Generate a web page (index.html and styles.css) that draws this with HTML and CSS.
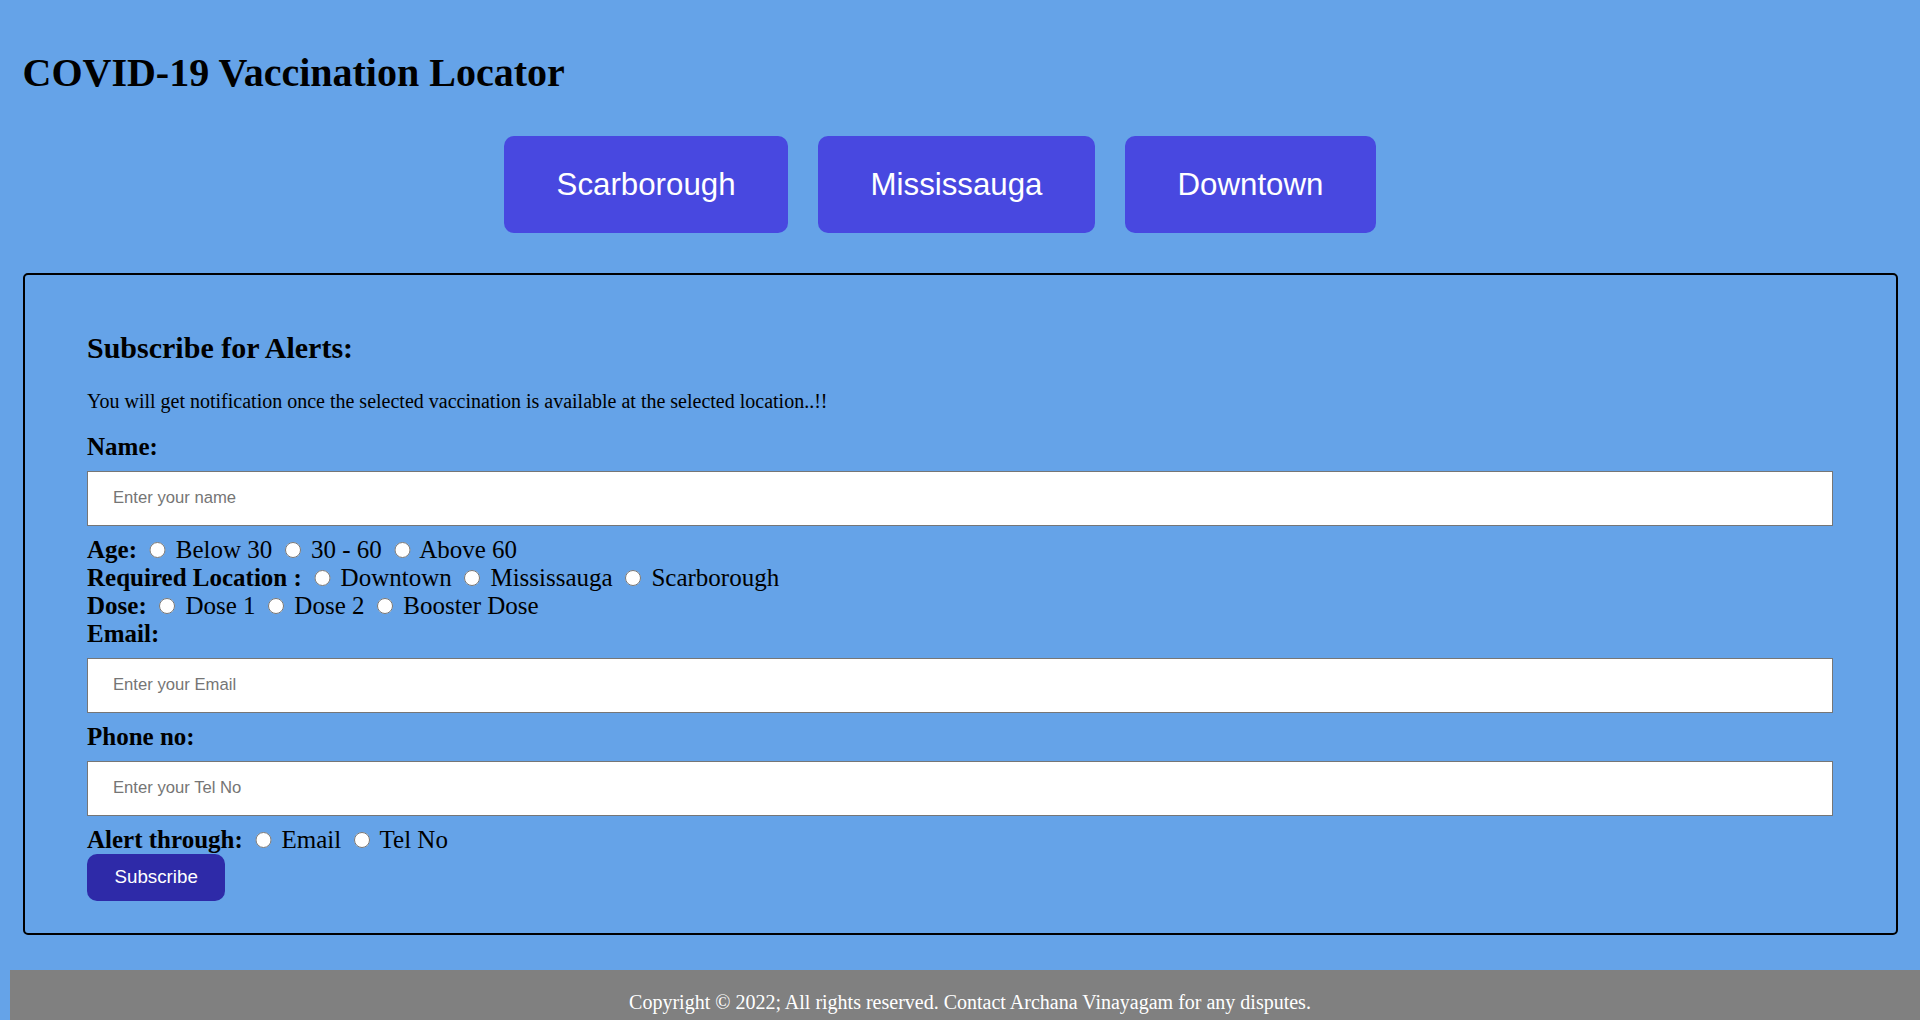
FILE: index.html
```html
<!DOCTYPE html>
<html lang="en">
<head>
<meta charset="utf-8">
<title>COVID-19 Vaccination Locator</title>
<link rel="stylesheet" href="styles.css">
</head>
<body>
<header class="header">
  <h1 class="title">COVID-19 Vaccination Locator</h1>
</header>
<nav class="nav">
  <button class="nav-btn" type="button">Scarborough</button>
  <button class="nav-btn" type="button">Mississauga</button>
  <button class="nav-btn" type="button">Downtown</button>
</nav>
<main class="panel">
  <h2 class="panel-title">Subscribe for Alerts:</h2>
  <p class="panel-note">You will get notification once the selected vaccination is available at the selected location..!!</p>
  <form class="form">
    <label class="lbl" for="name">Name:</label>
    <input class="field" id="name" type="text" placeholder="Enter your name">
    <div class="row"><span class="lbl-inline">Age:</span> <input class="radio" type="radio" name="age"> Below 30 <input class="radio" type="radio" name="age"> 30 - 60 <input class="radio" type="radio" name="age"> Above 60</div>
    <div class="row"><span class="lbl-inline">Required Location :</span> <input class="radio" type="radio" name="loc"> Downtown <input class="radio" type="radio" name="loc"> Mississauga <input class="radio" type="radio" name="loc"> Scarborough</div>
    <div class="row"><span class="lbl-inline">Dose:</span> <input class="radio" type="radio" name="dose"> Dose 1 <input class="radio" type="radio" name="dose"> Dose 2 <input class="radio" type="radio" name="dose"> Booster Dose</div>
    <label class="lbl" for="email">Email:</label>
    <input class="field" id="email" type="text" placeholder="Enter your Email">
    <label class="lbl" for="tel">Phone no:</label>
    <input class="field" id="tel" type="text" placeholder="Enter your Tel No">
    <div class="row"><span class="lbl-inline">Alert through:</span> <input class="radio" type="radio" name="via"> Email <input class="radio" type="radio" name="via"> Tel No</div>
    <button class="submit" type="button">Subscribe</button>
  </form>
</main>
<footer class="footer">Copyright © 2022; All rights reserved. Contact Archana Vinayagam for any disputes.</footer>
</body>
</html>
```
FILE: styles.css
```css
html {
  overflow: hidden;
  background: #65a3e8;
}
body {
  margin: 10px 0 0 10px;
  font-family: "Liberation Serif", "Times New Roman", serif;
  color: #000;
}
.header {
  padding: 39px 10px 0 12.5px;
}
.title {
  margin: 0;
  font-size: 40px;
  font-weight: bold;
}
.nav {
  display: flex;
  justify-content: center;
  gap: 30px;
  padding-right: 50px;
  margin-top: 40px;
}
.nav-btn {
  font-family: "Liberation Sans", Arial, sans-serif;
  font-size: 31.25px;
  color: #fff;
  background: #4848e0;
  border: none;
  border-radius: 10px;
  padding: 30.5px 52.5px;
  line-height: normal;
}
.panel {
  display: block;
  margin: 40px 22.5px 0 12.5px;
  border: 2.5px solid #000;
  border-radius: 5px;
  padding: 31px 62.5px 32px;
}
.panel-title {
  font-size: 30px;
  font-weight: bold;
  margin: 24.9px 0;
}
.panel-note {
  font-size: 20px;
  margin: 20px 0;
}
.form {
  font-size: 25px;
}
.lbl {
  display: block;
  font-weight: bold;
}
.lbl-inline {
  font-weight: bold;
}
.row {
  line-height: normal;
}
.field {
  display: block;
  box-sizing: border-box;
  width: 100%;
  margin: 10px 0;
  padding: 16.5px 25px;
  border: 1px solid #767676;
  font-family: "Liberation Sans", Arial, sans-serif;
  font-size: 16.67px;
  background: #fff;
}
.field::placeholder {
  color: #757575;
}
.radio {
  width: 16.25px;
  height: 16.25px;
  margin: 3.75px 3.75px 0 6.25px;
}
.submit {
  display: block;
  font-family: "Liberation Sans", Arial, sans-serif;
  font-size: 18.75px;
  color: #fff;
  background: #2e2aa8;
  border: none;
  border-radius: 10px;
  padding: 12.5px 27.5px;
  line-height: normal;
}
.footer {
  margin-top: 35px;
  background: #808080;
  color: #fff;
  font-size: 20px;
  line-height: 23px;
  text-align: center;
  padding: 21px 0 25px 10px;
}
```
